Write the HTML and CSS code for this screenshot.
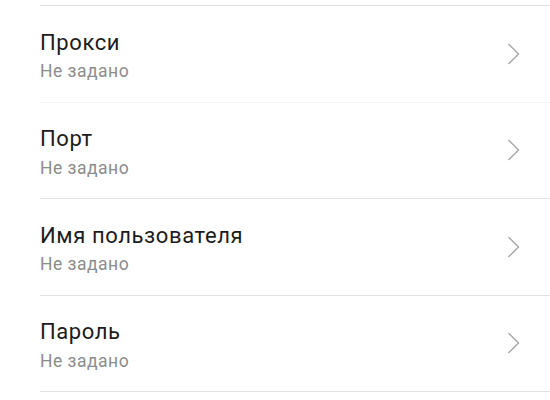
FILE: index.html
```html
<!DOCTYPE html>
<html lang="ru">
<head>
<meta charset="utf-8">
<link rel="stylesheet" href="styles.css">
</head>
<body>
<div class="list">
  <div class="row row-soft">
    <div class="text">
      <div class="title">Прокси</div>
      <div class="sub">Не задано</div>
    </div>
    <svg class="chev" width="13" height="22" viewBox="0 0 13 22"><polyline points="1.5,1 11.5,11 1.5,21" fill="none" stroke="#a8a8a8" stroke-width="1.4"/></svg>
  </div>
  <div class="row">
    <div class="text">
      <div class="title">Порт</div>
      <div class="sub">Не задано</div>
    </div>
    <svg class="chev" width="13" height="22" viewBox="0 0 13 22"><polyline points="1.5,1 11.5,11 1.5,21" fill="none" stroke="#a8a8a8" stroke-width="1.4"/></svg>
  </div>
  <div class="row">
    <div class="text">
      <div class="title">Имя пользователя</div>
      <div class="sub">Не задано</div>
    </div>
    <svg class="chev" width="13" height="22" viewBox="0 0 13 22"><polyline points="1.5,1 11.5,11 1.5,21" fill="none" stroke="#a8a8a8" stroke-width="1.4"/></svg>
  </div>
  <div class="row">
    <div class="text">
      <div class="title">Пароль</div>
      <div class="sub">Не задано</div>
    </div>
    <svg class="chev" width="13" height="22" viewBox="0 0 13 22"><polyline points="1.5,1 11.5,11 1.5,21" fill="none" stroke="#a8a8a8" stroke-width="1.4"/></svg>
  </div>
</div>
</body>
</html>
```
FILE: styles.css
```css
html, body {
  margin: 0;
  padding: 0;
  background: #ffffff;
  width: 550px;
  height: 400px;
  overflow: hidden;
  font-family: Roboto, "Noto Sans", sans-serif;
}

.list {
  margin-top: 5px;
  margin-left: 40px;
  border-top: 1px solid #e2e2e2;
}

.row {
  box-sizing: border-box;
  height: 96.5px;
  border-bottom: 1px solid #e2e2e2;
  display: flex;
  align-items: center;
  justify-content: space-between;
  padding-top: 4px;
  padding-right: 30px;
}

.row-soft {
  border-bottom-color: #f3f3f3;
}

.text {
  display: flex;
  flex-direction: column;
  gap: 4.5px;
}

.title {
  font-size: 22px;
  line-height: 26px;
  letter-spacing: 0.6px;
  color: #1c1c1c;
}

.sub {
  font-size: 17.5px;
  line-height: 22px;
  letter-spacing: 0.5px;
  color: #8c8c8c;
}

.chev {
  display: block;
  margin-bottom: 4px;
}
```
